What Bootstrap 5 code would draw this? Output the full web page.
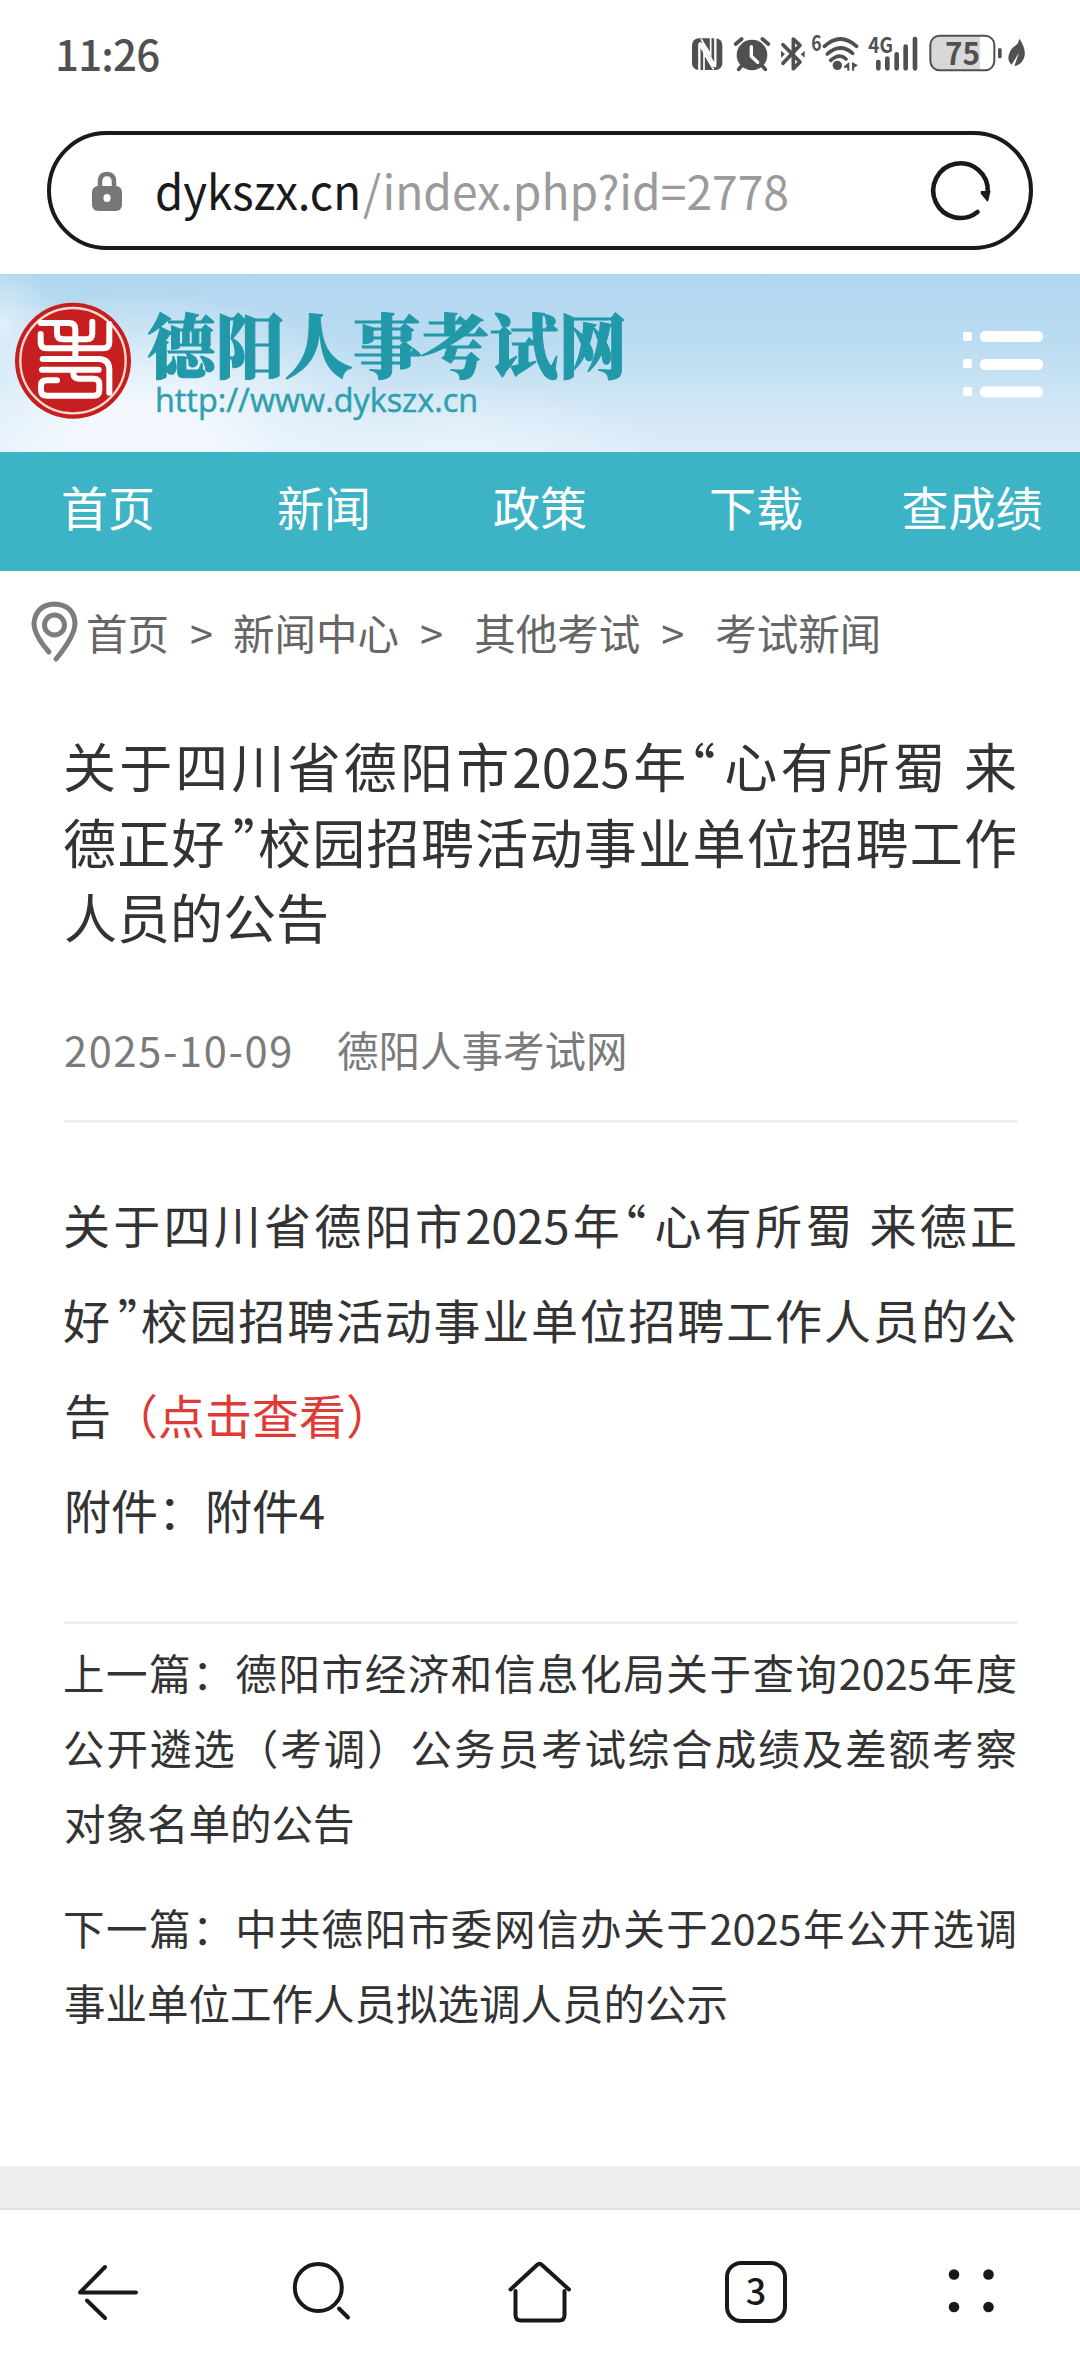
<!DOCTYPE html>
<html lang="zh-CN">
<head>
    <meta charset="UTF-8">
    <meta name="viewport" content="width=device-width, initial-scale=1.0">
    <title>德阳人事考试网</title>
    <link href="https://cdn.jsdelivr.net/npm/bootstrap@5.3.0/dist/css/bootstrap.min.css" rel="stylesheet">
    <style>
        body {
            font-family: "Noto Sans CJK SC", "Noto Sans", sans-serif;
            color: #333;
            background: #fff;
            overflow: hidden;
        }
        svg { display: block; flex: none; overflow: visible; }
        a { color: inherit; text-decoration: none; }

        .status-bar { height: 131px; padding: 20px 20px 0 55px; color: #505050; }
        .clock { font-size: 42px; font-weight: 500; line-height: 66px; letter-spacing: -.8px; }

        .url-bar {
            height: 119px;
            margin: 0 47px;
            padding: 0 38px 0 41px;
            border: 4px solid #1a1a1a;
        }
        .url-text { margin-left: 34px; }

        .banner {
            height: 178px;
            margin-top: 24px;
            padding-right: 37px;
            background:
                radial-gradient(ellipse 260px 150px at 140px 165px, rgba(244, 249, 254, .95) 20%, rgba(244, 249, 254, 0)),
                radial-gradient(ellipse 60px 60px at 0 50px, rgba(240, 247, 253, .7), rgba(240, 247, 253, 0)),
                radial-gradient(ellipse 200px 70px at 460px 175px, rgba(240, 247, 253, .7), rgba(240, 247, 253, 0)),
                linear-gradient(#b0d6ef, #bbdcf1 40%, #cbe4f4 65%, #ddecf8);
        }
        .main-nav { height: 119px; background: #3cb4c5; color: #fff; font-size: 47px; line-height: 107px; }

        .crumbs { height: 121px; padding-left: 32px; font-size: 41.5px; line-height: 120px; color: #666; }
        .crumb-home { margin-left: 8px; }
        .crumb-sep { margin: 0 20px 0 21px; }
        .crumb-wide { margin-right: 31px; }

        .article { padding: 0 63px 0 64px; }
        .article-title { margin: 36px 0 0; font-size: 53px; line-height: 75.5px; font-weight: 400; }
        .fill-line { display: block; margin-left: -1px; white-space: nowrap; text-align: justify; text-align-last: justify; }
        .quote-open, .quote-close { font-feature-settings: "palt"; }
        .quote-open { margin: 0 .12em 0 -.02em; }
        .quote-close { margin: 0 -.06em 0 .14em; }
        .article-meta { height: 168px; padding-top: 43px; font-size: 41.5px; line-height: 102px; color: #7b7b7b; border-bottom: 3px solid #eee; }
        .pub-date { width: 273px; letter-spacing: 1.7px; }
        .article-body { height: 501px; padding-top: 53px; font-size: 47px; line-height: 95px; border-bottom: 3px solid #eee; }
        .view-link { color: #e03a36; }
        .siblings { font-size: 41.5px; line-height: 75px; padding-top: 11.5px; height: 542px; }
        .siblings p { margin: 0 0 29.5px; }

        .page-gap { height: 44px; background: #efefef; border-bottom: 2px solid #e0e0e0; }
        .tool-bar { height: 165px; }
    </style>
</head>
<body>
    <!-- Status bar -->
    <div class="status-bar d-flex justify-content-between align-items-start">
        <div class="clock">11:26</div>
        <svg width="400" height="70" viewBox="0 0 1200 210" fill="#505050" stroke-linecap="round">
            <!-- NFC -->
            <rect x="96" y="55" width="91" height="95" rx="20"/>
            <path d="M118 150V78Q118 62 129 76L166 138M166 55V128Q166 146 153 130L118 72" fill="none" stroke="#fff" stroke-width="7"/>
            <path d="M132 150V100L160 147M152 55V104L124 58" fill="none" stroke="#fff" stroke-width="5"/>
            <!-- alarm -->
            <circle cx="276" cy="105" r="46"/>
            <path d="M227 72L245 57M325 72L307 57M246 136L236 148M306 136L316 148" fill="none" stroke="#505050" stroke-width="11"/>
            <path d="M274 80V109L293 127" fill="none" stroke="#fff" stroke-width="10"/>
            <!-- bluetooth -->
            <path d="M369 74L420 126L400 146V57L420 76L369 130" fill="none" stroke="#505050" stroke-width="11" stroke-linejoin="round"/>
            <path d="M363 92L375 103L363 113ZM434 92L422 103L434 113Z"/>
            <!-- wifi -->
            <text x="454" y="94" font-size="64" font-weight="700" textLength="31" lengthAdjust="spacingAndGlyphs">6</text>
            <path d="M493 79Q541 35 590 79M502 102Q541 67 578 100M512 121Q538 98 558 117" fill="none" stroke="#505050" stroke-width="11"/>
            <circle cx="532" cy="136" r="14"/>
            <path d="M552 139L568 126V152H562V143H552ZM576 126L594 136L582 143V152H576Z"/>
            <!-- signal -->
            <text x="625" y="98" font-size="64" font-weight="700" textLength="74" lengthAdjust="spacingAndGlyphs">4G</text>
            <path d="M655 126V145M682 116V145M710 103V145M737 80V145M765 57V145" stroke="#505050" stroke-width="14"/>
            <!-- battery -->
            <path d="M838 46H960V152H838Q811 152 811 124V74Q811 46 838 46Z" fill="#d8d8d8"/>
            <rect x="811" y="47" width="192" height="104" rx="28" fill="none" stroke="#505050" stroke-width="6"/>
            <rect x="1014" y="84" width="11" height="31" rx="5"/>
            <text x="855" y="134" font-size="91" font-weight="700" textLength="105" lengthAdjust="spacingAndGlyphs">75</text>
            <!-- leaf -->
            <path d="M1078 56Q1097 82 1094 107Q1088 134 1063 138L1077 98L1055 134Q1041 123 1047 103Q1052 85 1068 76Q1076 69 1078 56Z"/>
        </svg>
    </div>

    <!-- Address bar -->
    <div class="url-bar rounded-pill d-flex align-items-center">
        <svg width="30" height="40" viewBox="0 0 30 40">
            <path d="M8 17V11Q8 3 15 3Q22 3 22 11V17" fill="none" stroke="#777" stroke-width="4.5"/>
            <rect y="15" width="30" height="25" rx="6" fill="#777"/>
            <rect x="11.5" y="23" width="7" height="8" rx="3.5" fill="#fff"/>
        </svg>
        <svg class="url-text" width="640" height="100" viewBox="0 0 640 100" font-size="47">
            <text x="-1" y="69" fill="#1a1a1a" textLength="206" lengthAdjust="spacingAndGlyphs">dykszx.cn</text>
            <text x="207" y="69" fill="#9b9b9b" textLength="426" lengthAdjust="spacingAndGlyphs">/index.php?id=2778</text>
        </svg>
        <svg class="ms-auto" width="60" height="60" viewBox="0 0 60 60">
            <path d="M46.5 51A27.3 27.3 0 1 1 56.8 31" fill="none" stroke="#1a1a1a" stroke-width="4.6" stroke-linecap="round"/>
            <path d="M50.5 30H59.5L57.5 39Q56.5 42 55 39L50 33Q49 30 50.5 30Z" fill="#1a1a1a"/>
        </svg>
    </div>

    <!-- Site banner -->
    <header class="banner d-flex justify-content-between align-items-center">
        <svg width="640" height="178" viewBox="0 0 640 178">
            <g transform="translate(8 22) scale(.3333)" fill="none" stroke-linecap="round" stroke-linejoin="round">
                <circle cx="195" cy="194" r="174" fill="#c5201f"/>
                <circle cx="195" cy="194" r="158" stroke="#fbd9d5" stroke-width="7"/>
                <g stroke="#fff" stroke-width="18">
                    <path d="M98 81H182Q202 81 202 100V185"/>
                    <path d="M147 92V112Q147 130 165 130H236Q253 130 253 112V77"/>
                    <path d="M98 114V138Q98 157 116 157H285Q304 157 304 138V84"/>
                    <path d="M104 189H275Q304 191 304 222V290"/>
                    <path d="M102 221H272M196 222V231Q196 248 212 248H257Q274 248 274 265V282Q274 299 257 299H118Q99 299 99 282V268Q99 253 116 253H147"/>
                </g>
            </g>
            <text x="147" y="99" font-family="'Noto Serif CJK SC', 'Noto Sans CJK SC', serif" font-size="70" font-weight="900" fill="#2299a9" stroke="#2299a9" stroke-width="1" textLength="480" lengthAdjust="spacingAndGlyphs">德阳人事考试网</text>
            <text x="155" y="138" font-family="'Open Sans', sans-serif" font-size="33" fill="#2f9fae" stroke="#2f9fae" stroke-width=".5" textLength="323" lengthAdjust="spacingAndGlyphs">http://www.dykszx.cn</text>
        </svg>
        <svg width="80" height="64" viewBox="0 0 80 64" fill="#fff">
            <rect y="1" width="9" height="9" rx="2"/><rect x="17" width="63" height="11" rx="5"/>
            <rect y="28" width="9" height="9" rx="2"/><rect x="17" y="28" width="63" height="11" rx="5"/>
            <rect y="56" width="9" height="9" rx="2"/><rect x="17" y="55.5" width="63" height="11" rx="5"/>
        </svg>
    </header>

    <nav class="main-nav row g-0 text-center">
        <a class="col" href="#">首页</a>
        <a class="col" href="#">新闻</a>
        <a class="col" href="#">政策</a>
        <a class="col" href="#">下载</a>
        <a class="col text-nowrap" href="#">查成绩</a>
    </nav>

    <!-- Breadcrumb -->
    <div class="crumbs d-flex align-items-center">
        <svg width="46" height="60" viewBox="0 0 46 60" fill="none" stroke="#7d7d7d">
            <path d="M17 50Q2 33 2 21Q4 3 22 2Q42 3 43 21Q43 34 24 57" stroke-width="5" stroke-linecap="round"/>
            <circle cx="22.5" cy="23" r="10" stroke-width="5"/>
        </svg>
        <a class="crumb-home" href="#">首页</a><span class="crumb-sep">&gt;</span>
        <a href="#">新闻中心</a><span class="crumb-sep crumb-wide">&gt;</span>
        <a href="#">其他考试</a><span class="crumb-sep crumb-wide">&gt;</span>
        <a href="#">考试新闻</a>
    </div>

    <!-- Article -->
    <main class="article">
        <h1 class="article-title">
            <span class="fill-line">关于四川省德阳市2025年<span class="quote-open">“</span>心有所蜀 来</span>
            <span class="fill-line">德正好<span class="quote-close">”</span>校园招聘活动事业单位招聘工作</span>
            <span class="d-block">人员的公告</span>
        </h1>
        <div class="article-meta d-flex"><span class="pub-date">2025-10-09</span><span>德阳人事考试网</span></div>
        <div class="article-body">
            <span class="fill-line">关于四川省德阳市2025年<span class="quote-open">“</span>心有所蜀 来德正</span>
            <span class="fill-line">好<span class="quote-close">”</span>校园招聘活动事业单位招聘工作人员的公</span>
            <span class="d-block">告<a class="view-link" href="#">（点击查看）</a></span>
            <span class="d-block">附件：<a href="#">附件4</a></span>
        </div>
        <div class="siblings">
            <p>
                <span class="fill-line">上一篇：德阳市经济和信息化局关于查询2025年度</span>
                <span class="fill-line">公开遴选（考调）公务员考试综合成绩及差额考察</span>
                <span class="d-block">对象名单的公告</span>
            </p>
            <p>
                <span class="fill-line">下一篇：中共德阳市委网信办关于2025年公开选调</span>
                <span class="d-block">事业单位工作人员拟选调人员的公示</span>
            </p>
        </div>
    </main>
    <div class="page-gap"></div>

    <!-- Browser tool bar -->
    <footer class="tool-bar row g-0 align-items-center">
        <div class="col d-flex justify-content-center">
            <svg width="64" height="64" viewBox="0 0 64 64" fill="none" stroke="#17191a" stroke-width="4" stroke-linecap="round" stroke-linejoin="round">
                <path d="M60 32.5H4L29 7M11 40.5L29 58"/>
            </svg>
        </div>
        <div class="col d-flex justify-content-center">
            <svg width="64" height="64" viewBox="0 0 64 64" fill="none" stroke="#17191a" stroke-width="4" stroke-linecap="round">
                <circle cx="26.3" cy="27.5" r="23.5"/><path d="M47 48.5L56 57.5"/>
            </svg>
        </div>
        <div class="col d-flex justify-content-center">
            <svg width="64" height="64" viewBox="0 0 64 64" fill="none" stroke="#17191a" stroke-width="4" stroke-linecap="round" stroke-linejoin="round">
                <path d="M2.5 29.5L29 5Q31.5 2.5 34 5L61 29.5"/>
                <path d="M7.5 31V55Q7.5 60.5 13 60.5H51Q56.5 60.5 56.5 55V31"/>
            </svg>
        </div>
        <div class="col d-flex justify-content-center">
            <svg width="64" height="64" viewBox="0 0 64 64">
                <rect x="3" y="3" width="58" height="58" rx="14" fill="none" stroke="#17191a" stroke-width="4"/>
                <text x="32" y="45" font-size="36" font-weight="500" text-anchor="middle" fill="#17191a">3</text>
            </svg>
        </div>
        <div class="col d-flex justify-content-center">
            <svg width="64" height="64" viewBox="0 0 64 64" fill="#17191a">
                <circle cx="14" cy="14.5" r="5.3"/><circle cx="48.5" cy="14.5" r="5.3"/>
                <circle cx="14" cy="47" r="5.3"/><circle cx="48.5" cy="47" r="5.3"/>
            </svg>
        </div>
    </footer>

    <script src="https://cdn.jsdelivr.net/npm/bootstrap@5.3.0/dist/js/bootstrap.bundle.min.js"></script>
</body>
</html>
